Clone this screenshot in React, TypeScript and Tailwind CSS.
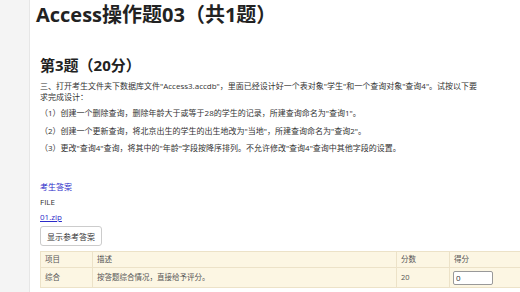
import React from "react";

const ITEMS = [
  "（1）创建一个删除查询，删除年龄大于或等于28的学生的记录，所建查询命名为\"查询1\"。",
  "（2）创建一个更新查询，将北京出生的学生的出生地改为\"当地\"，所建查询命名为\"查询2\"。",
  "（3）更改\"查询4\"查询，将其中的\"年龄\"字段按降序排列。不允许修改\"查询4\"查询中其他字段的设置。",
];

export default function App() {
  return (
    <div
      className="flex h-[292px] w-[520px] overflow-hidden bg-white text-[#333]"
      style={{ fontFamily: '"Open Sans", "Noto Sans CJK SC", sans-serif' }}
    >
      {/* Sidebar */}
      <div className="w-[30px] shrink-0 bg-[#f4f4f4] border-r border-[#e6e6e6]" />

      {/* Main */}
      <div className="flex-1 min-w-0 pl-[6px]">
        <h1 className="text-[20px] leading-[28px] font-bold text-[#222] mt-[1px]">Access操作题03（共1题）</h1>

        <div className="pl-[4px]">
          <h2 className="text-[15px] leading-[20px] font-bold text-[#222] mt-[26px]">第3题（20分）</h2>
          <p className="text-[8px] leading-[11px] mt-[5px] pr-[42px]">
            三、打开考生文件夹下数据库文件"Access3.accdb"，里面已经设计好一个表对象"学生"和一个查询对象"查询4"。试按以下要求完成设计：
          </p>
          <div className="flex flex-col gap-[6.5px] mt-[5px] text-[8px] leading-[11px]">
            {ITEMS.map((t) => (
              <p key={t}>{t}</p>
            ))}
          </div>

          <div className="mt-[28px] flex flex-col items-start text-[8px] leading-[11px]">
            <a className="text-[#2b2bc9]">考生答案</a>
            <span className="mt-[4px] font-normal text-[#333]">FILE</span>
            <a className="mt-[4px] text-[#2b2bc9] underline">01.zip</a>
            <button className="mt-[4px] h-[20px] px-[6px] border border-[#ccc] rounded-[3px] bg-white text-[#333]">
              显示参考答案
            </button>
          </div>

          <table className="mt-[5px] w-[490px] border-collapse text-[7.5px] text-[#555]">
            <tbody>
              <tr className="bg-[#fcf6e3] h-[16px]">
                <td className="w-[52px] border border-[#ece2c8] pl-[4px]">项目</td>
                <td className="border border-[#ece2c8] pl-[4px]">描述</td>
                <td className="w-[53px] border border-[#ece2c8] pl-[4px]">分数</td>
                <td className="w-[80px] border border-[#ece2c8] pl-[4px]">得分</td>
              </tr>
              <tr className="bg-[#fcf6e3] h-[20px]">
                <td className="border border-[#ece2c8] pl-[4px]">综合</td>
                <td className="border border-[#ece2c8] pl-[4px]">按答题综合情况，直接给予评分。</td>
                <td className="border border-[#ece2c8] pl-[4px]">20</td>
                <td className="border border-[#ece2c8] pl-[3px]">
                  <input
                    defaultValue="0"
                    className="w-[40px] h-[14px] border border-[#999] rounded-[2px] bg-white px-[2px] text-[8px] text-[#333] outline-none"
                  />
                </td>
              </tr>
            </tbody>
          </table>
        </div>
      </div>
    </div>
  );
}
